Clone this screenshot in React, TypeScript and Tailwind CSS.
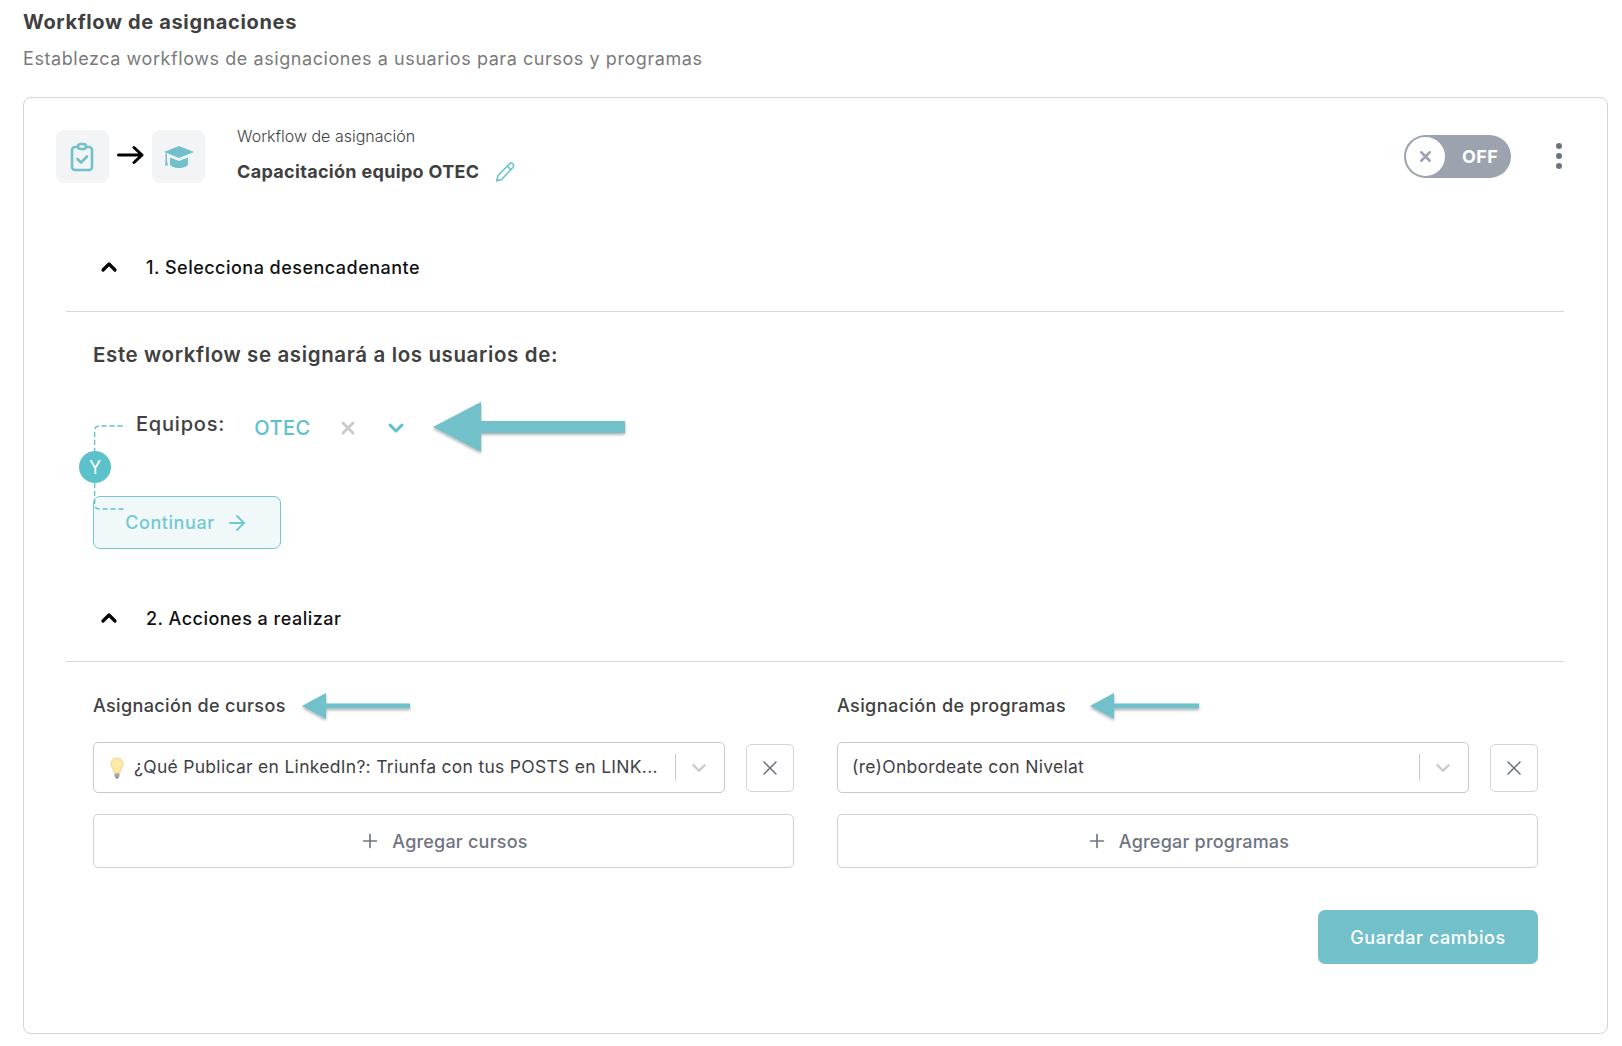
import { ArrowRight, ChevronDown, ChevronUp, Plus, X } from "lucide-react";

const Arrow = ({ w, h, head, bar }: { w: number; h: number; head: number; bar: number }) => (
  <svg width={w + 4} height={h + 6} viewBox={`0 0 ${w + 4} ${h + 6}`} className="shrink-0 overflow-visible">
    <defs>
      <filter id={`s${w}`} x="-10%" y="-30%" width="120%" height="170%">
        <feDropShadow dx="0" dy="1.5" stdDeviation="1.5" floodColor="#000" floodOpacity="0.35" />
      </filter>
    </defs>
    <path
      d={`M0 ${h / 2} L${head} 0 V${h / 2 - bar / 2} H${w} V${h / 2 + bar / 2} H${head} V${h} Z`}
      fill="#72c0ca"
      filter={`url(#s${w})`}
    />
  </svg>
);

const CourseSelect = ({ text, bulb }: { text: string; bulb?: boolean }) => (
  <div className="flex items-center gap-[21px]">
    <div className="flex h-[51px] flex-1 min-w-0 items-center rounded-[5px] border border-[#c9c9cf] pl-[14px] pr-[14px]">
      {bulb && (
        <svg width="14" height="22" viewBox="0 0 14 22" className="ml-[2px] mr-[10px] shrink-0">
          <path d="M7 1C3.5 1 1 3.5 1 6.700c0 3 2.500 4.800 3.200 9.300h5.600C10.500 11.500 13 9.700 13 6.700 13 3.500 10.500 1 7 1Z" fill="#fbe9a8" stroke="#e8cf74" strokeWidth="0.8" />
          <rect x="4.500" y="16.500" width="5" height="3.500" rx="0.8" fill="#a3a3a3" />
          <rect x="5.500" y="20" width="3" height="1.500" rx="0.700" fill="#777" />
        </svg>
      )}
      <span className="flex-1 whitespace-nowrap text-[17.5px] tracking-[0.29px] text-[#3f3f46]">{text}</span>
      <div className="ml-[9px] mr-[12px] h-[27px] w-px bg-[#c9c9c9]" />
      <ChevronDown size={22} strokeWidth={2.6} className="text-[#c9c9c9]" />
    </div>
    <button className="flex h-[48px] w-[48px] shrink-0 items-center justify-center rounded-[5px] border border-[#d4d4d8] text-[#6b7280]">
      <X size={24} strokeWidth={1.5} />
    </button>
  </div>
);

const AddButton = ({ label }: { label: string }) => (
  <button className="mt-[21px] flex h-[54px] w-full items-center justify-center gap-[11px] rounded-[5px] border border-[#d1d1d6] text-[18px] font-medium tracking-[0.2px] text-[#6f7482]">
    <Plus size={22} strokeWidth={1.8} />
    {label}
  </button>
);

const SectionHead = ({ label }: { label: string }) => (
  <div className="flex h-[50px] items-center pl-[31px]">
    <ChevronUp size={24} strokeWidth={3.2} className="text-black" />
    <span className="ml-[25px] text-[18px] font-medium tracking-[0.48px] text-[#111]">{label}</span>
  </div>
);

export default function App() {
  return (
    <div className="h-[1046px] bg-white pl-[23px] pr-[14px] pt-[10px] font-['Inter',sans-serif]">
      <h1 className="text-[20px] font-bold leading-[24px] tracking-[0.65px] text-[#404040]">Workflow de asignaciones</h1>
      <p className="mt-[13px] text-[18px] leading-[24px] tracking-[0.57px] text-[#7a7a7a]">
        Establezca workflows de asignaciones a usuarios para cursos y programas
      </p>

      <div className="mt-[26px] h-[937px] rounded-[8px] border border-[#cdd3e0] pl-[42px] pr-[43px] pt-[25px]">
        {/* header */}
        <div className="-ml-[10px] flex items-start justify-between">
          <div className="flex">
            <div className="mt-[7px] flex h-[53px] w-[53px] items-center justify-center rounded-[8px] bg-[#f2f4f6]">
              <svg width="26" height="30" viewBox="0 0 26 30" fill="none" stroke="#72c0ca" strokeWidth="2.6" className="-ml-[1px]">
                <rect x="3" y="5" width="20" height="23" rx="3" />
                <rect x="9" y="2" width="8" height="5" rx="2.500" fill="#f2f4f6" />
                <path d="M8.500 17l3.500 3.500 6-6" strokeLinecap="round" strokeLinejoin="round" />
              </svg>
            </div>
            <div className="mt-[5px] flex h-[53px] w-[43px] items-center justify-center">
              <svg width="27" height="20" viewBox="0 0 27 20" fill="none" stroke="#000" strokeWidth="3" strokeLinecap="round" strokeLinejoin="round">
                <path d="M1.500 10H25M17 2.500 25 10l-8 7.500" />
              </svg>
            </div>
            <div className="mt-[7px] flex h-[53px] w-[53px] items-center justify-center rounded-[8px] bg-[#f2f4f6]">
              <svg width="32" height="24" viewBox="0 0 32 24" fill="#72c0ca">
                <path d="M16 1 31 7 16 13 1 7Z" />
                <path d="M7 12.500 16 16l9-3.500V19c0 2-4 4-9 4s-9-2-9-4Z" />
                <path d="M2.500 8.500h1.500v7l1 5H2l.5-5Z" />
              </svg>
            </div>
            <div className="ml-[32px]">
              <div className="mt-[1px] text-[16px] font-light leading-[24px] text-[#3f3f46]">Workflow de asignación</div>
              <div className="mt-[12px] flex items-center">
                <span className="text-[18px] font-bold leading-[24px] tracking-[0.32px] text-[#404040]">Capacitación equipo OTEC</span>
                <svg width="20" height="20" viewBox="0 0 24 24" fill="none" stroke="#5bc2cc" strokeWidth="1.700" className="ml-[16px]">
                  <path d="M17 2.500a3 3 0 0 1 4.500 4L8 21l-6 1.500L3.500 16.500Z" strokeLinejoin="round" />
                  <path d="M15 5l4 4" />
                </svg>
              </div>
            </div>
          </div>
          <div className="flex items-start pt-[12px]">
            <div className="flex h-[43px] w-[107px] items-center rounded-full bg-[#9ca3af] pl-[2px]">
              <div className="flex h-[39px] w-[39px] items-center justify-center rounded-full bg-white text-[#9ca3af]">
                <X size={17} strokeWidth={3.5} />
              </div>
              <span className="ml-[17px] text-[18px] font-bold tracking-[0.4px] text-white">OFF</span>
            </div>
            <div className="ml-[45px] mr-[2px] mt-[8px] flex flex-col gap-[4px]">
              <span className="h-[6px] w-[6px] rounded-full bg-[#6b7280]" />
              <span className="h-[6px] w-[6px] rounded-full bg-[#6b7280]" />
              <span className="h-[6px] w-[6px] rounded-full bg-[#6b7280]" />
            </div>
          </div>
        </div>

        {/* paso 1 */}
        <div className="mt-[58px]">
          <SectionHead label="1. Selecciona desencadenante" />
          <div className="mt-[19px] h-px bg-[#d9d9d9]" />
        </div>
        <div className="pl-[27px]">
          <h2 className="mt-[30px] text-[20.5px] font-semibold leading-[26px] tracking-[0.62px] text-[#404040]">
            Este workflow se asignará a los usuarios de:
          </h2>

          <div className="relative mt-[28px] h-[100px]">
            <svg width="40" height="100" viewBox="0 0 40 100" fill="none" stroke="#5bc2cc" strokeWidth="1.6" strokeDasharray="5 3" className="absolute left-[1px] top-[27px] z-10">
              <path d="M0.500 30V8q0-5 5-5H32" />
              <path d="M0.500 60V81q0 5 5 5H32" />
            </svg>
            <div className="absolute left-[-14px] top-[55px] flex h-[32px] w-[32px] items-center justify-center rounded-full bg-[#5bc2cc] text-[18px] text-white">
              Y
            </div>
            <div className="flex items-center pl-[43px]">
              <span className="-mt-[6px] text-[20px] font-medium leading-[32px] tracking-[0.8px] text-[#404040]">Equipos:</span>
              <span className="ml-[29px] mt-[2px] text-[20px] font-medium tracking-[0.5px] text-[#5bc2cc]">OTEC</span>
              <X size={20} strokeWidth={3.4} className="ml-[27px] mt-[2px] text-[#c9c9c9]" />
              <ChevronDown size={24} strokeWidth={3} className="ml-[26px] mt-[2px] text-[#5bc2cc]" />
              <div className="ml-[25px] mt-[6px]">
                <Arrow w={192} h={50} head={48} bar={12} />
              </div>
            </div>
          </div>

          <button className="relative flex h-[53px] w-[188px] items-center justify-center gap-[10px] rounded-[7px] border border-[#72c8d0] bg-[#f0f8fa] text-[18px] font-medium tracking-[0.55px] text-[#72c8d0]">
            Continuar
            <ArrowRight size={24} strokeWidth={1.8} />
          </button>
        </div>

        {/* paso 2 */}
        <div className="mt-[44px]">
          <SectionHead label="2. Acciones a realizar" />
          <div className="mt-[18px] h-px bg-[#d9d9d9]" />
        </div>
        <div className="mt-[24px] grid grid-cols-2 gap-[43px] pl-[27px] pr-[26px]">
          <div>
            <div className="flex items-center">
              <span className="text-[18px] font-medium leading-[26px] tracking-[0.36px] text-[#404040]">Asignación de cursos</span>
              <div className="ml-[16px] mt-[7px]">
                <Arrow w={108} h={26} head={24} bar={5} />
              </div>
            </div>
            <div className="mt-[17px]">
              <CourseSelect bulb text="¿Qué Publicar en LinkedIn?: Triunfa con tus POSTS en LINK..." />
            </div>
            <AddButton label="Agregar cursos" />
          </div>
          <div>
            <div className="flex items-center">
              <span className="text-[18px] font-medium leading-[26px] tracking-[0.4px] text-[#404040]">Asignación de programas</span>
              <div className="ml-[24px] mt-[7px]">
                <Arrow w={109} h={26} head={24} bar={5} />
              </div>
            </div>
            <div className="mt-[17px]">
              <CourseSelect text="(re)Onbordeate con Nivelat" />
            </div>
            <AddButton label="Agregar programas" />
            <div className="mt-[42px] flex justify-end">
              <button className="h-[54px] w-[220px] rounded-[7px] bg-[#72c0ca] text-[18px] font-medium tracking-[0.55px] text-white">
                Guardar cambios
              </button>
            </div>
          </div>
        </div>
      </div>
    </div>
  );
}
